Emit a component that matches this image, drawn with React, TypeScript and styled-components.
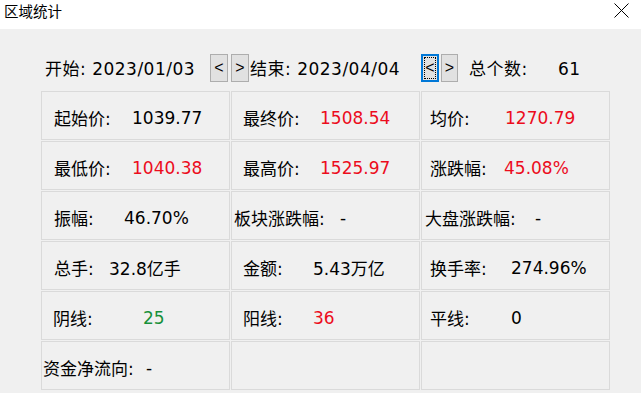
import React from "react";
import styled, { createGlobalStyle } from "styled-components";

const Global = createGlobalStyle`
  html, body { margin: 0; padding: 0; }
  body {
    background: #f0f0f0;
    font-family: "DejaVu Sans", "Noto Sans CJK SC", sans-serif;
    color: #000;
    width: 641px;
    height: 393px;
    overflow: hidden;
  }
`;

const Window = styled.div`
  width: 641px;
  height: 393px;
  display: flex;
  flex-direction: column;
  background: #f0f0f0;
`;

const TitleBar = styled.div`
  height: 29px;
  background: #ffffff;
  display: flex;
  align-items: flex-start;
  justify-content: space-between;
  padding: 0 12px 0 4px;
  box-sizing: border-box;
`;

const Title = styled.div`
  font-family: "Noto Sans CJK SC", sans-serif;
  font-size: 14.5px;
  line-height: 21px;
`;

const CloseBox = styled.div`
  width: 15px;
  height: 15px;
  margin-top: 3px;
`;

const Body = styled.div`
  display: flex;
  flex-direction: column;
  padding: 25px 0 0 41px;
`;

const Toolbar = styled.div`
  display: flex;
  align-items: center;
  height: 28px;
  padding-left: 4px;
  font-size: 17px;
`;

const Text = styled.span<{ $ml?: number; $w?: number }>`
  margin-left: ${(p) => p.$ml ?? 0}px;
  ${(p) => (p.$w ? `width: ${p.$w}px; flex: none;` : "")}
  white-space: pre;
  line-height: 28px;
  padding-top: 2px;
  letter-spacing: 0.5px;
`;

const ArrowBtn = styled.div<{ $focused?: boolean; $ml?: number; $w?: number }>`
  box-sizing: border-box;
  width: ${(p) => p.$w ?? 18}px;
  height: 28px;
  flex: none;
  margin-left: ${(p) => p.$ml ?? 0}px;
  background: #e1e1e1;
  border: ${(p) => (p.$focused ? "2px solid #0078d7" : "1px solid #adadad")};
  display: flex;
  align-items: center;
  justify-content: center;
  font-size: 16px;
  font-family: "Liberation Sans", sans-serif;
  position: relative;
  &::after {
    content: "";
    display: ${(p) => (p.$focused ? "block" : "none")};
    position: absolute;
    inset: 1px;
    border: 1px dotted #000;
  }
`;

const Grid = styled.div`
  margin-top: 9px;
  width: 569px;
  display: grid;
  grid-template-columns: 189px 189px 189px;
  grid-auto-rows: 49px;
  column-gap: 1px;
  row-gap: 1px;
`;

const Cell = styled.div<{ $pad: number }>`
  box-sizing: border-box;
  border: 1px solid #dadada;
  display: flex;
  align-items: center;
  padding: 4px 0 0 ${(p) => p.$pad}px;
  font-size: 17px;
`;

const Label = styled.span<{ $w?: number }>`
  ${(p) => (p.$w ? `width: ${p.$w}px; flex: none;` : "")}
  white-space: pre;
`;

const Value = styled.span<{ $tone?: "red" | "green" }>`
  color: ${(p) => (p.$tone === "red" ? "#ec0c1c" : p.$tone === "green" ? "#17903a" : "#000")};
  white-space: pre;
`;

type Item = {
  label?: string;
  value?: string;
  tone?: "red" | "green";
  pad: number;
  w?: number;
};

const items: Item[] = [
  { label: "起始价:", value: "1039.77", pad: 12, w: 78 },
  { label: "最终价:", value: "1508.54", tone: "red", pad: 11, w: 77 },
  { label: "均价:", value: "1270.79", tone: "red", pad: 8, w: 75 },
  { label: "最低价:", value: "1040.38", tone: "red", pad: 12, w: 78 },
  { label: "最高价:", value: "1525.97", tone: "red", pad: 11, w: 77 },
  { label: "涨跌幅:", value: "45.08%", tone: "red", pad: 8, w: 74 },
  { label: "振幅:", value: "46.70%", pad: 12, w: 70 },
  { label: "板块涨跌幅:", value: "-", pad: 2, w: 106 },
  { label: "大盘涨跌幅:", value: "-", pad: 3, w: 110 },
  { label: "总手:", value: "32.8亿手", pad: 12, w: 55 },
  { label: "金额:", value: "5.43万亿", pad: 11, w: 70 },
  { label: "换手率:", value: "274.96%", pad: 8, w: 81 },
  { label: "阴线:", value: "25", tone: "green", pad: 11, w: 90 },
  { label: "阳线:", value: "36", tone: "red", pad: 11, w: 70 },
  { label: "平线:", value: "0", pad: 8, w: 81 },
  { label: "资金净流向:", value: "-", pad: 1, w: 103 },
  { pad: 0 },
  { pad: 0 },
];

export default function App() {
  return (
    <Window>
      <Global />
      <TitleBar>
        <Title>区域统计</Title>
        <CloseBox>
          <svg width="15" height="15" viewBox="0 0 15 15">
            <path d="M0.5 0.5 L14.5 14.5 M14.5 0.5 L0.5 14.5" stroke="#000" strokeWidth="1" fill="none" />
          </svg>
        </CloseBox>
      </TitleBar>
      <Body>
        <Toolbar>
          <Text $w={165}>开始: 2023/01/03</Text>
          <ArrowBtn>&lt;</ArrowBtn>
          <ArrowBtn $ml={3}>&gt;</ArrowBtn>
          <Text $ml={1} $w={171}>结束: 2023/04/04</Text>
          <ArrowBtn $focused>&lt;</ArrowBtn>
          <ArrowBtn $ml={2} $w={17}>&gt;</ArrowBtn>
          <Text $ml={11} $w={89}>总个数:</Text>
          <Text>61</Text>
        </Toolbar>
        <Grid>
          {items.map((it, i) => (
            <Cell key={i} $pad={it.pad}>
              {it.label && <Label $w={it.w}>{it.label}</Label>}
              {it.value && <Value $tone={it.tone}>{it.value}</Value>}
            </Cell>
          ))}
        </Grid>
      </Body>
    </Window>
  );
}
